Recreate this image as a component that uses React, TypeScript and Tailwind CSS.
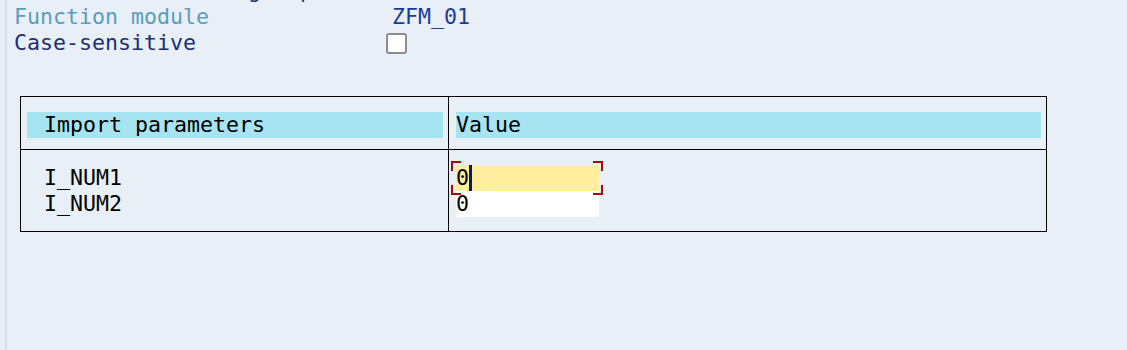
const mono = "font-['DejaVu_Sans_Mono','Liberation_Mono',monospace] text-[21.6px] leading-[26px] whitespace-pre";

function Bracket() {
  // red corner marks around the focused input
  return (
    <div className="pointer-events-none absolute -left-[5px] -right-[4px] -top-[4px] -bottom-[4px]">
      <div className="absolute left-0 top-0 h-[10px] w-[10px] border-l-2 border-t-2 border-[#a80a0a]" />
      <div className="absolute right-0 top-0 h-[10px] w-[10px] border-r-2 border-t-2 border-[#a80a0a]" />
      <div className="absolute left-0 bottom-0 h-[10px] w-[10px] border-l-2 border-b-2 border-[#a80a0a]" />
      <div className="absolute right-0 bottom-0 h-[10px] w-[10px] border-r-2 border-b-2 border-[#a80a0a]" />
    </div>
  );
}

export default function App() {
  const params = ['I_NUM1', 'I_NUM2'];

  return (
    <div className={`flex h-[350px] w-full overflow-hidden bg-[#e9eff7] ${mono}`}>
      <div className="w-[5px] shrink-0" />
      <div className="w-[2px] shrink-0 bg-[#d9dce8]" />

      <div className="flex flex-1 flex-col">
        <div className="-mt-[22px] grid grid-cols-[378px_1fr] pl-[7px]">
          <div className="text-[#1b2f73]">Test for function group</div>
          <div />

          <div className="text-[#5a9db8]">Function module</div>
          <div className="text-[#1b3a9a]">ZFM_01</div>

          <div className="text-[#1b2f73]">Case-sensitive</div>
          <div className="flex items-center">
            <div className="-ml-[6px] h-[21px] w-[21px] rounded-[3px] border-2 border-[#8c8c8c] bg-white" />
          </div>
        </div>

        <div className="ml-[13px] mt-[40px] w-[1027px] border border-black text-black">
          <div className="flex h-[53px] border-b border-black">
            <div className="w-[427px] pl-[6px] pr-[5px] pt-[15px]">
              <div className="h-[26px] bg-[#a6e4f2] pl-[17px]">Import parameters</div>
            </div>
            <div className="w-px bg-black" />
            <div className="flex-1 pl-[7px] pr-[5px] pt-[15px]">
              <div className="h-[26px] bg-[#a6e4f2]">Value</div>
            </div>
          </div>

          <div className="flex h-[81px]">
            <div className="w-[427px] pl-[23px] pt-[15px]">
              {params.map((p) => (
                <div key={p} className="h-[26px]">{p}</div>
              ))}
            </div>
            <div className="w-px bg-black" />
            <div className="flex-1 pl-[7px] pt-[15px]">
              <div className="relative flex h-[26px] w-[143px] bg-[#ffee9e]">
                <span>0</span>
                <span className="h-full w-[3px] bg-[#0c1a63]" />
                <Bracket />
              </div>
              <div className="h-[26px] w-[143px] bg-white">0</div>
            </div>
          </div>
        </div>
      </div>
    </div>
  );
}
